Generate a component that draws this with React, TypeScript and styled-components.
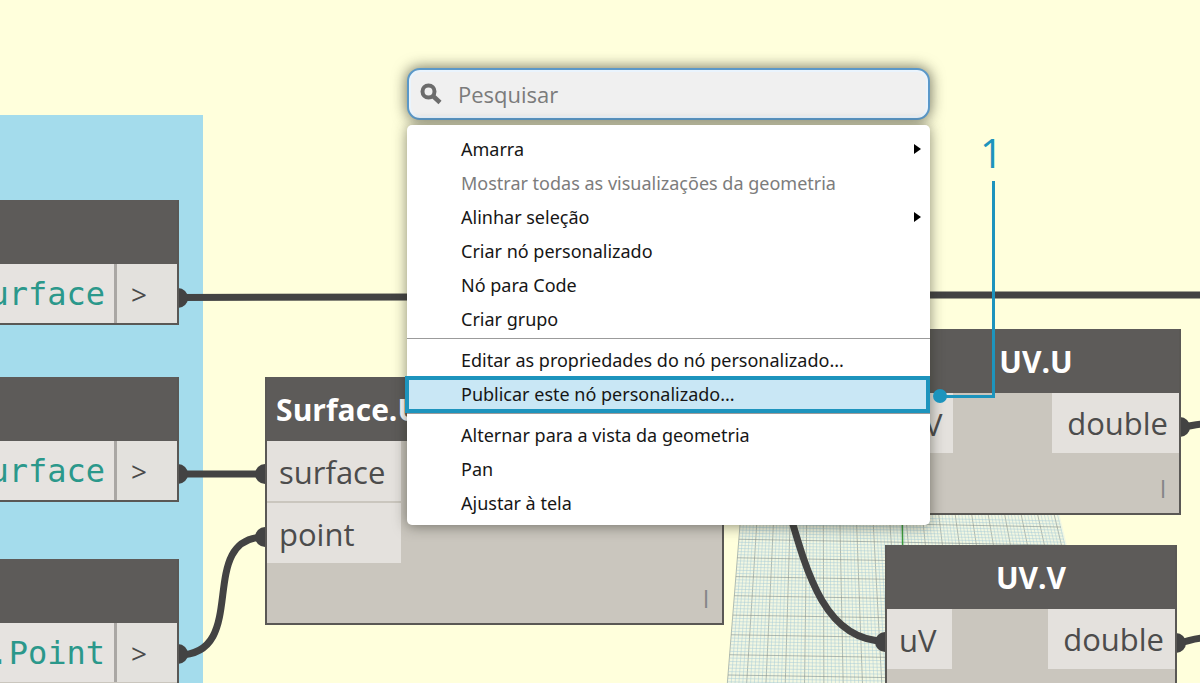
import React from "react";
import styled, { createGlobalStyle } from "styled-components";

const GlobalStyle = createGlobalStyle`
  * { box-sizing: border-box; }
  body { margin: 0; background: #ffffdc; }
  button, input { font-family: inherit; margin: 0; }
`;

const wireColor = "#434343";
const accent = "#1d94bd";

const Workspace = styled.main`
  position: relative;
  width: 100%;
  height: 100vh;
  overflow: hidden;
  background: #ffffdc;
  font-family: "Open Sans", "Noto Sans", sans-serif;
`;

const Group = styled.div`
  position: absolute;
  left: 0;
  top: 115px;
  bottom: 0;
  width: 203px;
  background: #a4dcec;
`;

const Layer = styled.svg`
  position: absolute;
  inset: 0;
  width: 100%;
  height: 100%;
  pointer-events: none;
`;

const NodeCard = styled.section<{ $x: number; $y: number; $w: number }>`
  position: absolute;
  left: ${(p) => p.$x}px;
  top: ${(p) => p.$y}px;
  width: ${(p) => p.$w}px;
  background: #cac6be;
  border: 2px solid #5a5855;
  border-top: 0;
`;

const NodeHeader = styled.h2`
  display: flex;
  align-items: center;
  justify-content: center;
  height: 64px;
  margin: 0;
  padding-top: 2px;
  background: #5d5b59;
  color: #fff;
  font-size: 30px;
  line-height: 40px;
  font-weight: 700;
  white-space: nowrap;
`;

const CodeBody = styled.div<{ $tail: number }>`
  display: flex;
  padding-bottom: ${(p) => p.$tail}px;
`;

const CodeField = styled.input`
  flex: 1;
  min-width: 0;
  height: 59px;
  padding: 0 9px 0 0;
  border: 0;
  border-right: 3px solid #aaa7a4;
  border-radius: 0;
  background: #e6e3e0;
  color: #2b988b;
  && { font-family: "DejaVu Sans Mono", monospace; }
  font-size: 32px;
  text-align: right;
  outline: none;
`;

const CodePort = styled.button`
  width: 60px;
  height: 59px;
  padding: 0 14px;
  border: 0;
  background: #e3e1dd;
  color: #4a4a4a;
  font-size: 28px;
  text-align: left;
`;

const NodeBody = styled.div`
  display: flex;
  justify-content: space-between;
  align-items: flex-start;
`;

const PortList = styled.div`
  display: flex;
  flex-direction: column;
  gap: 2px;
`;

const Port = styled.button<{ $w: number }>`
  width: ${(p) => p.$w}px;
  height: 60px;
  padding: 2px 12px 0;
  border: 0;
  background: #e4e1dd;
  color: #4c4c4c;
  font-size: 31px;
  line-height: 40px;
  text-align: left;
  white-space: nowrap;
`;

const OutPort = styled(Port)`
  padding: 0 11px;
  text-align: right;
`;

const Lacing = styled.div`
  display: flex;
  align-items: center;
  justify-content: flex-end;
  height: 60px;
  padding: 12px 13px 0 0;
  color: #858789;
  font-size: 24px;
  line-height: 32px;
`;

const Popup = styled.div`
  position: absolute;
  left: 407px;
  top: 68px;
  width: 523px;
  display: flex;
  flex-direction: column;
  gap: 5px;
`;

const SearchBox = styled.label`
  display: flex;
  align-items: center;
  gap: 16px;
  height: 52px;
  padding: 0 11px;
  border: 2px solid #5b98c8;
  border-radius: 13px;
  background: #f0f0f0;
  box-shadow: inset 0 0 0 2px #eaf4fd, 0 0 14px 1px rgba(30, 30, 20, 0.6);
`;

const SearchInput = styled.input`
  flex: 1;
  min-width: 0;
  padding: 0;
  border: 0;
  outline: none;
  background: transparent;
  color: #333;
  font-size: 22px;
  line-height: 30px;
  &::placeholder { color: #7b7b7b; opacity: 1; }
`;

const Menu = styled.ul`
  position: relative;
  margin: 0;
  padding: 7px 0 5px;
  list-style: none;
  background: #fff;
  border-radius: 5px;
  box-shadow: 0 1px 14px 0 rgba(40, 40, 30, 0.55);
`;

const MenuItem = styled.button<{ $active?: boolean }>`
  position: relative;
  display: flex;
  align-items: center;
  justify-content: space-between;
  width: 100%;
  height: 34px;
  padding: 0 9px 0 54px;
  border: 0;
  background: ${(p) => (p.$active ? "#c9e7f5" : "transparent")};
  color: #161616;
  && { font-family: "Noto Sans", "Open Sans", sans-serif; }
  font-size: 18px;
  line-height: 24px;
  text-align: left;
  white-space: nowrap;
  &:disabled { color: #7c7c7c; }
  &::after {
    content: "";
    display: ${(p) => (p.$active ? "block" : "none")};
    position: absolute;
    inset: -1px 0 -2px -2px;
    border: 4px solid ${accent};
  }
`;

const Separator = styled.li`
  height: 1px;
  margin: 2px 0 4px;
  background: #9b9b9b;
`;

const CalloutNumber = styled.span`
  position: absolute;
  left: 980px;
  top: 125px;
  color: ${accent};
  font-size: 40px;
  line-height: 56px;
`;

/* Ground plane grid seen in perspective: columns fan out from a point above it. */
const GRID_TOP = 512;
const GRID_BOTTOM = 900;
const fan = (x: number, y: number) => 820 + (x - 820) * (1 + (y - 525) / 1000);
const columns = Array.from({ length: 97 }, (_, i) => 740 + (i * 10) / 3);
const rows = Array.from({ length: 120 }, (_, i) => 515 + i * 3 + i * i * 0.004);

function GroundGrid() {
  return (
    <g>
      <polygon
        fill="#f2f7e2"
        points={`${fan(740, GRID_TOP)},${GRID_TOP} ${fan(1062, GRID_TOP)},${GRID_TOP} ${fan(1062, GRID_BOTTOM)},${GRID_BOTTOM} ${fan(740, GRID_BOTTOM)},${GRID_BOTTOM}`}
      />
      {columns.map((x, i) => (
        <line
          key={i}
          x1={fan(x, GRID_TOP)}
          y1={GRID_TOP}
          x2={fan(x, GRID_BOTTOM)}
          y2={GRID_BOTTOM}
          stroke={i % 5 === 0 ? "#80908f" : "#a8cbd8"}
          strokeOpacity={i % 5 === 0 ? 0.6 : 0.5}
        />
      ))}
      {rows.map((y, i) => (
        <line
          key={i}
          x1={fan(740, y)}
          y1={y}
          x2={fan(1062, y)}
          y2={y + 6}
          stroke={i % 6 === 2 ? "#80908f" : "#a8cbd8"}
          strokeOpacity={i % 6 === 2 ? 0.6 : 0.5}
        />
      ))}
      <line x1="902" y1={GRID_TOP} x2="903" y2="560" stroke="#3c9a3c" strokeWidth="1.5" />
    </g>
  );
}

function Wires() {
  const ends = [
    [178, 298], [178, 474], [178, 654], [265, 474], [265, 537],
    [885, 642], [1180, 427], [1176, 643],
  ];
  return (
    <g fill="none" stroke={wireColor} strokeWidth="7">
      <path d="M178 297.500 L420 297 L900 295 L4000 295" />
      <path d="M178 474 H265" />
      <path d="M178 655 C252 655 194 537 265 537" />
      <path d="M770 450 C800 530 808 641 885 641" />
      <path d="M1180 427 C1190 427 1194 424 1204 424" />
      <path d="M1176 643 C1186 643 1192 638 1204 638" />
      {ends.map(([x, y]) => (
        <circle key={`${x}-${y}`} cx={x} cy={y} r="10" fill={wireColor} stroke="none" />
      ))}
    </g>
  );
}

function CodeNode({ y, value, tail = 0 }: { y: number; value: string; tail?: number }) {
  return (
    <NodeCard $x={-120} $y={y} $w={299}>
      <NodeHeader />
      <CodeBody $tail={tail}>
        <CodeField aria-label={`Code ${value}`} defaultValue={value} />
        <CodePort type="button">&gt;</CodePort>
      </CodeBody>
    </NodeCard>
  );
}

type NodeProps = {
  x: number; y: number; w: number; title: string;
  inputs: string[]; inputWidth: number; output?: string;
};

function GraphNode({ x, y, w, title, inputs, inputWidth, output }: NodeProps) {
  return (
    <NodeCard $x={x} $y={y} $w={w}>
      <NodeHeader>{title}</NodeHeader>
      <NodeBody>
        <PortList>
          {inputs.map((name) => (
            <Port key={name} type="button" $w={inputWidth}>{name}</Port>
          ))}
        </PortList>
        {output && <OutPort type="button" $w={127}>{output}</OutPort>}
      </NodeBody>
      <Lacing>l</Lacing>
    </NodeCard>
  );
}

type Entry = { label: string; submenu?: boolean; disabled?: boolean; active?: boolean };

const sections: Entry[][] = [
  [
    { label: "Amarra", submenu: true },
    { label: "Mostrar todas as visualizações da geometria", disabled: true },
    { label: "Alinhar seleção", submenu: true },
    { label: "Criar nó personalizado" },
    { label: "Nó para Code" },
    { label: "Criar grupo" },
  ],
  [
    { label: "Editar as propriedades do nó personalizado..." },
    { label: "Publicar este nó personalizado...", active: true },
  ],
  [
    { label: "Alternar para a vista da geometria" },
    { label: "Pan" },
    { label: "Ajustar à tela" },
  ],
];

function ContextMenu() {
  return (
    <Popup>
      <SearchBox>
        <svg width="22" height="22" viewBox="0 0 22 22" fill="none" stroke="#6c6c6c" aria-hidden="true">
          <circle cx="8.500" cy="8.500" r="6" strokeWidth="4" />
          <path d="M13 13 L20 19.500" strokeWidth="4.500" />
        </svg>
        <SearchInput type="text" placeholder="Pesquisar" aria-label="Pesquisar" />
      </SearchBox>
      <Menu>
        {sections.map((section, s) => (
          <React.Fragment key={s}>
            {s > 0 && <Separator role="separator" />}
            {section.map((item) => (
              <li key={item.label}>
                <MenuItem type="button" $active={item.active} disabled={item.disabled}>
                  {item.label}
                  {item.submenu && (
                    <svg width="7" height="12" viewBox="0 0 7 12" aria-hidden="true">
                      <path d="M0 1 L7 6 L0 11 Z" fill="#000" />
                    </svg>
                  )}
                </MenuItem>
              </li>
            ))}
          </React.Fragment>
        ))}
      </Menu>
    </Popup>
  );
}

export default function App() {
  return (
    <>
      <GlobalStyle />
      <Workspace>
        <Group />
        <Layer aria-hidden="true">
          <GroundGrid />
          <Wires />
        </Layer>
        <CodeNode y={200} value="Surface" />
        <CodeNode y={377} value="Surface" />
        <CodeNode y={559} value=".Point" tail={20} />
        <GraphNode x={265} y={377} w={459} title="Surface.UVParameterAtPoint" inputs={["surface", "point"]} inputWidth={134} />
        <GraphNode x={891} y={329} w={290} title="UV.U" inputs={["uV"]} inputWidth={60} output="double" />
        <GraphNode x={885} y={545} w={292} title="UV.V" inputs={["uV"]} inputWidth={65} output="double" />
        <ContextMenu />
        <Layer aria-hidden="true">
          <path d="M993.500 181 V396.500 H940" fill="none" stroke={accent} strokeWidth="3" />
          <circle cx="940" cy="396" r="7" fill={accent} />
        </Layer>
        <CalloutNumber>1</CalloutNumber>
      </Workspace>
    </>
  );
}
